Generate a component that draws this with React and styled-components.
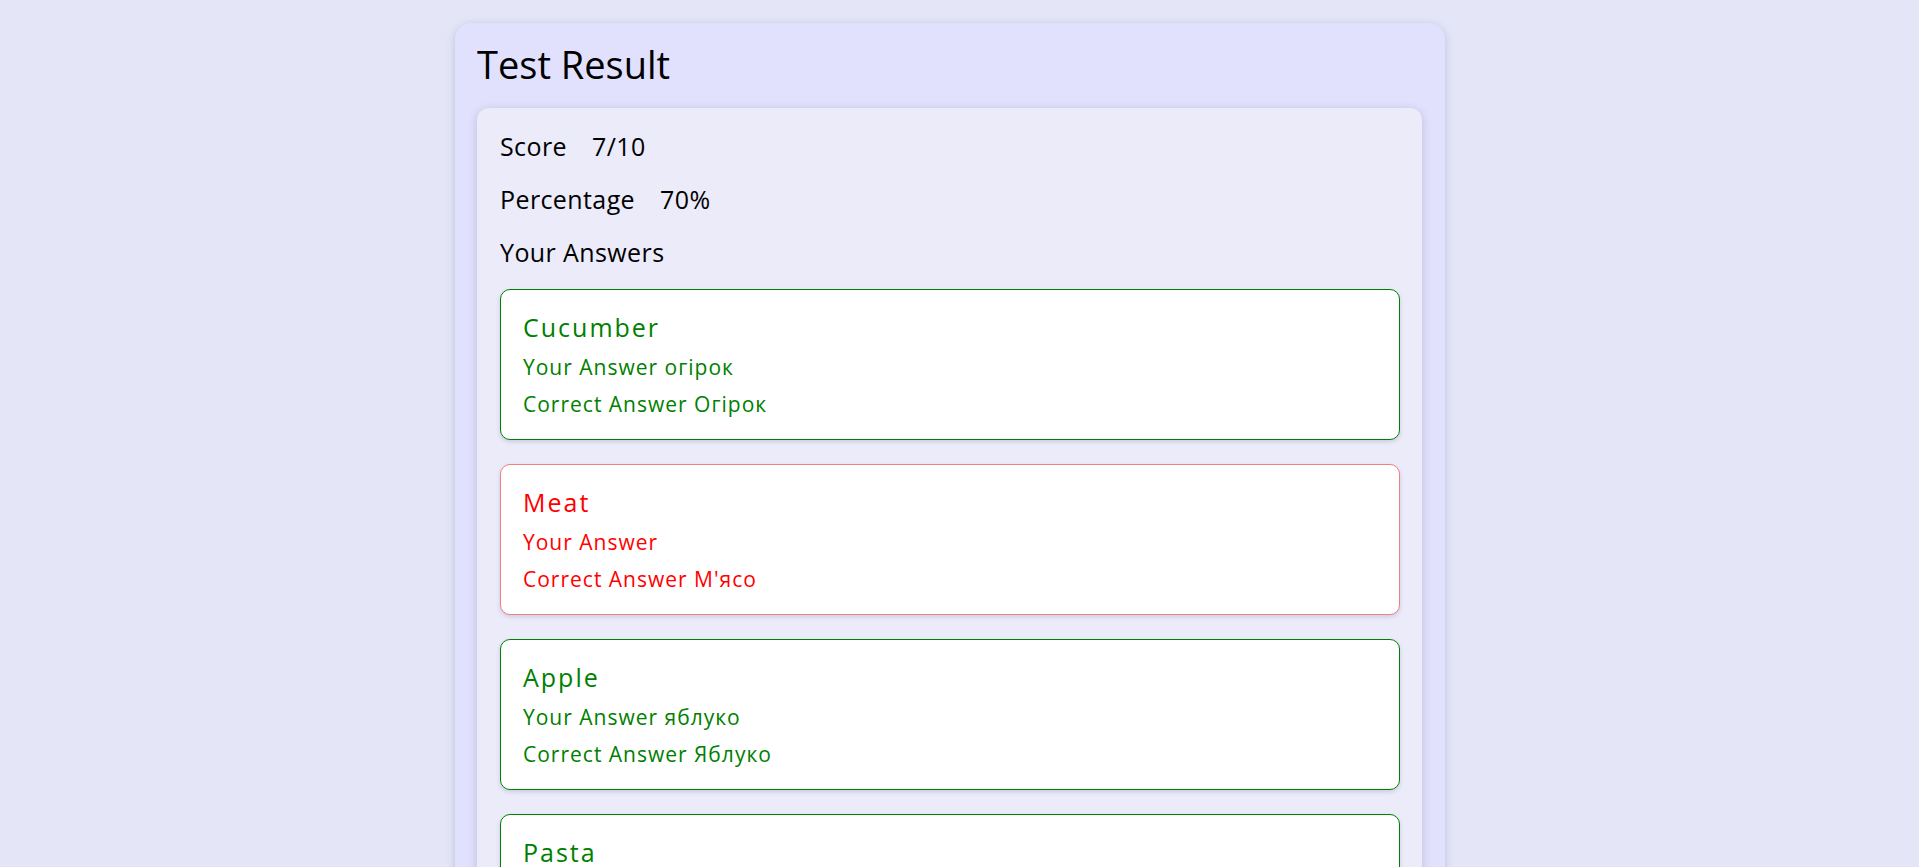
import React from "react";
import styled, { createGlobalStyle } from "styled-components";

const Global = createGlobalStyle`
  html, body { margin: 0; padding: 0; }
  body {
    background: #e4e6f8;
    font-family: "Open Sans", "DejaVu Sans", sans-serif;
    color: #000;
  }
`;

const Page = styled.div`
  padding: 23px 0 40px 455px;
`;

const Outer = styled.section`
  width: 990px;
  box-sizing: border-box;
  background: #e1e1fd;
  border-radius: 16px;
  padding: 18px 23px 22px 22px;
  box-shadow: 0 2px 10px rgba(80, 80, 130, 0.25);
`;

const Title = styled.h1`
  margin: 0 0 21px 0;
  font-size: 38px;
  line-height: 46px;
  font-weight: 400;
`;

const Inner = styled.div`
  background: #ebebfa;
  border-radius: 12px;
  padding: 22px 22px 22px 23px;
  display: flex;
  flex-direction: column;
  gap: 21px;
  box-shadow: 0 2px 8px rgba(80, 80, 130, 0.25);
`;

const Stat = styled.div`
  font-size: 25px;
  line-height: 32px;
  letter-spacing: 0.4px;
  display: flex;
  gap: 25px;
`;

const Answers = styled.div`
  display: flex;
  flex-direction: column;
  gap: 24px;
`;

const Card = styled.div`
  background: #fff;
  border: 1px solid ${(p) => (p.$ok ? "#008000" : "#f08080")};
  border-radius: 10px;
  padding: 21px 22px 21px 22px;
  display: flex;
  flex-direction: column;
  gap: 9px;
  color: ${(p) => (p.$ok ? "#008000" : "#ff0000")};
  box-shadow: 0 2px 4px rgba(80, 80, 130, 0.2);
`;

const Word = styled.div`
  font-size: 25px;
  line-height: 32px;
  letter-spacing: 2px;
  margin-bottom: 1px;
`;

const Line = styled.div`
  font-size: 21px;
  line-height: 28px;
  letter-spacing: 1px;
`;

const answers = [
  { word: "Cucumber", yours: "огірок", correct: "Огірок", ok: true },
  { word: "Meat", yours: "", correct: "М'ясо", ok: false },
  { word: "Apple", yours: "яблуко", correct: "Яблуко", ok: true },
  { word: "Pasta", yours: "паста", correct: "Паста", ok: true },
  { word: "Bread", yours: "хліб", correct: "Хліб", ok: true },
  { word: "Milk", yours: "", correct: "Молоко", ok: false },
  { word: "Cheese", yours: "сир", correct: "Сир", ok: true },
  { word: "Egg", yours: "яйце", correct: "Яйце", ok: true },
  { word: "Fish", yours: "", correct: "Риба", ok: false },
  { word: "Water", yours: "вода", correct: "Вода", ok: true },
];

export default function App() {
  return (
    <>
      <Global />
      <Page>
        <Outer>
          <Title>Test Result</Title>
          <Inner>
            <Stat>
              <span>Score</span>
              <span>7/10</span>
            </Stat>
            <Stat>
              <span>Percentage</span>
              <span>70%</span>
            </Stat>
            <Stat>Your Answers</Stat>
            <Answers>
              {answers.map((a) => (
                <Card key={a.word} $ok={a.ok}>
                  <Word>{a.word}</Word>
                  <Line>Your Answer {a.yours}</Line>
                  <Line>Correct Answer {a.correct}</Line>
                </Card>
              ))}
            </Answers>
          </Inner>
        </Outer>
      </Page>
    </>
  );
}
